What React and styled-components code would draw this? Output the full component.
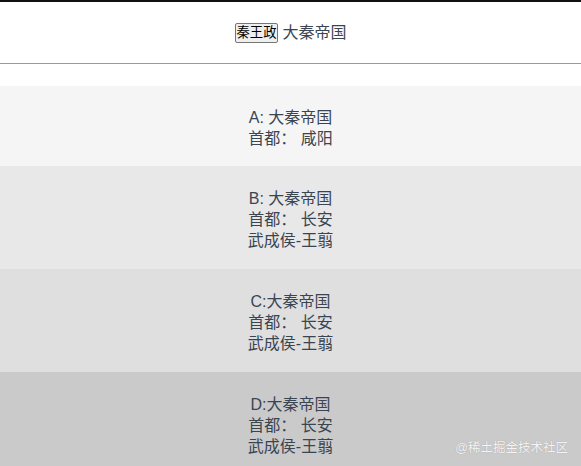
import styled, { createGlobalStyle } from "styled-components"

const GlobalStyle = createGlobalStyle`
    body {
        margin: 0;
        background: #ffffff;
        font-family: "Liberation Sans", "Noto Sans CJK SC", sans-serif;
        color: #2c3e50;
    }
`

const empires = [
    { title: "A: 大秦帝国", capital: "咸阳", tone: "#f5f5f5" },
    { title: "B: 大秦帝国", capital: "长安", general: "武成侯-王翦", tone: "#e8e8e8" },
    { title: "C:大秦帝国", capital: "长安", general: "武成侯-王翦", tone: "#dfdfdf" },
    { title: "D:大秦帝国", capital: "长安", general: "武成侯-王翦", tone: "#cacaca" },
]

export default function App() {
    return (
        <>
            <GlobalStyle />
            <Page>
                <Header>
                    <King>秦王政</King>
                    <Name>大秦帝国</Name>
                </Header>
                <List>
                    {empires.map((e) => (
                        <Block key={e.title} $tone={e.tone} $lines={e.general ? 3 : 2}>
                            <Line>{e.title}</Line>
                            <Line>首都： {e.capital}</Line>
                            {e.general && <Line>{e.general}</Line>}
                        </Block>
                    ))}
                </List>
                <Mark>@稀土掘金技术社区</Mark>
            </Page>
        </>
    )
}

const Page = styled.div`
    position: relative;
    min-height: 466px;
    border-top: 2px solid #111111;
    text-align: center;
`

const Header = styled.div`
    height: 61px;
    display: flex;
    align-items: center;
    justify-content: center;
    gap: 4px;
    border-bottom: 1px solid #9a9a9a;
`

const King = styled.button`
    font-family: "Liberation Sans", "Noto Sans CJK SC", sans-serif;
    font-size: 13.33px;
    line-height: 16px;
    color: #000000;
    padding: 1px 1px;
    height: 20px;
    border: 1px solid #767676;
    border-radius: 2px;
    background: #efefef;
`

const Name = styled.span`
    font-size: 16px;
    line-height: 21px;
    color: #3a4552;
`

const List = styled.div`
    margin-top: 22px;
`

const Block = styled.div`
    background: ${(p) => p.$tone};
    padding: ${(p) => (p.$lines === 3 ? "22px 0 18px" : "21px 0 17px")};
    color: #3a4552;
`

const Line = styled.div`
    font-size: 16px;
    line-height: 21px;
    white-space: pre;
`

const Mark = styled.div`
    position: absolute;
    right: 13px;
    top: 435px;
    font-size: 12.5px;
    color: #f4f4f4;
    text-shadow: 0 0 1px rgba(0, 0, 0, 0.25);
`
